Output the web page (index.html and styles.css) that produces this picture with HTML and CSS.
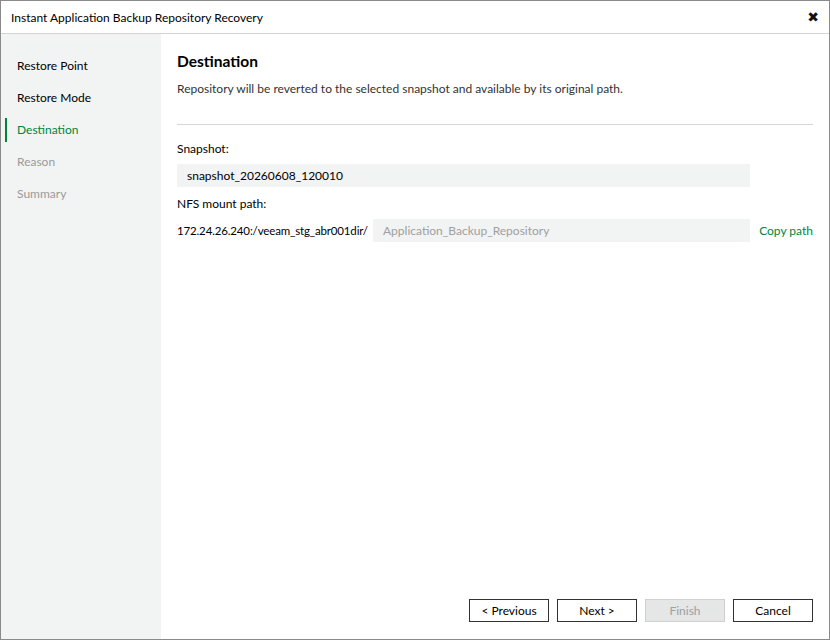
FILE: index.html
```html
<!DOCTYPE html>
<html lang="en">
<head>
  <meta charset="UTF-8" />
  <title>Instant Application Backup Repository Recovery</title>
  <link rel="stylesheet" href="styles.css">
</head>
<body>
  <div class="window">
    <!-- TITLE BAR -->
    <header class="titlebar">
      <span class="title">Instant Application Backup Repository Recovery</span>
      <span class="close">&#x2716;</span>
    </header>

    <div class="wizard">
      <!-- STEPS -->
      <nav class="steps">
        <div class="step done">Restore Point</div>
        <div class="step done">Restore Mode</div>
        <div class="step active">Destination</div>
        <div class="step">Reason</div>
        <div class="step">Summary</div>
      </nav>

      <!-- PAGE -->
      <main class="page">
        <h1>Destination</h1>
        <p class="desc">Repository will be reverted to the selected snapshot and available by its original path.</p>
        <hr />

        <div class="label first">Snapshot:</div>
        <div class="field snapshot">snapshot_20260608_120010</div>

        <div class="label second">NFS mount path:</div>
        <div class="path-row">
          <span class="prefix">172.24.26.240:/veeam_stg_abr001dir/</span>
          <div class="field placeholder">Application_Backup_Repository</div>
          <a href="#" class="link">Copy path</a>
        </div>

        <div class="buttons">
          <button>&lt; Previous</button>
          <button>Next &gt;</button>
          <button class="disabled" disabled>Finish</button>
          <button>Cancel</button>
        </div>
      </main>
    </div>
  </div>
</body>
</html>
```

FILE: styles.css
```css
/* Reset */
* {
  margin: 0; padding: 0; box-sizing: border-box;
}
html, body {
  width: 830px;
  height: 640px;
  font-family: 'Lato', sans-serif;
  font-size: 12px;
  color: #000;
  background: #fff;
  overflow: hidden;
}
/* VENTANA */
.window {
  width: 830px;
  height: 640px;
  border: 1px solid #8a8a8a;
  display: flex;
  flex-direction: column;
}
.titlebar {
  height: 33px;
  flex: none;
  border-bottom: 1px solid #d4d4d4;
  display: flex;
  justify-content: space-between;
  align-items: center;
  padding: 0 10px 0 10px;
}
.close {
  font-family: 'DejaVu Sans', sans-serif;
  font-size: 14px;
  font-weight: 700;
  color: #111;
}
.wizard {
  flex: 1;
  display: flex;
}
/* PASOS */
.steps {
  width: 160px;
  flex: none;
  background: #f2f3f3;
  padding-top: 20px;
}
.step {
  height: 32px;
  line-height: 24px;
  padding-left: 16px;
  color: #9a9a9a;
  position: relative;
}
.step.done {
  color: #000;
}
.step.active {
  color: #00843d;
}
.step.active::before {
  content: "";
  position: absolute;
  left: 4px;
  top: 0;
  width: 2px;
  height: 24px;
  background: #00843d;
}
/* CONTENIDO */
.page {
  flex: 1;
  padding: 14px 16px 17px 16px;
  display: flex;
  flex-direction: column;
}
h1 {
  font-size: 15.5px;
  font-weight: 700;
  line-height: 26px;
}
.desc {
  margin-top: 6px;
  line-height: 18px;
  font-size: 12px;
  color: #333;
}
hr {
  border: none;
  border-top: 1px solid #d6d6d6;
  margin-top: 26px;
}
.label {
  line-height: 18px;
}
.label.first {
  margin-top: 15px;
}
.label.second {
  margin-top: 8px;
}
.field {
  width: 573px;
  height: 23px;
  line-height: 23px;
  background: #f2f3f3;
  padding-left: 10px;
}
.field.snapshot {
  margin-top: 6px;
}
.path-row {
  margin-top: 6px;
  display: flex;
  align-items: center;
}
.prefix {
  width: 196px;
  flex: none;
  white-space: nowrap;
  font-size: 11.5px;
  letter-spacing: -0.15px;
}
.field.placeholder {
  width: 377px;
  flex: none;
  color: #a0a0a0;
}
.link {
  margin-left: auto;
  color: #00843d;
  text-decoration: none;
  white-space: nowrap;
}
/* BOTONES */
.buttons {
  margin-top: auto;
  display: flex;
  justify-content: flex-end;
  gap: 8px;
}
button {
  width: 80px;
  height: 23px;
  background: #fff;
  border: 1px solid #333;
  font-family: 'Lato', sans-serif;
  font-size: 12px;
  color: #000;
}
button.disabled {
  background: #e5e6e6;
  border-color: #d0d0d0;
  color: #a0a0a0;
}
```
